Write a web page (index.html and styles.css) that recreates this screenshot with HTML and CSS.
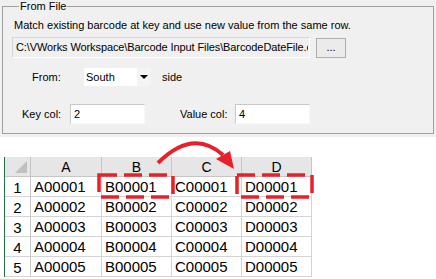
FILE: index.html
```html
<!DOCTYPE html>
<html lang="en">
<head>
    <meta charset="UTF-8">
    <title>Barcode input</title>
    <link rel="stylesheet" href="styles.css">
</head>
<body>
    <div class="dialog">
        <fieldset class="group">
            <legend>From File</legend>
            <p class="hint">Match existing barcode at key and use new value from the same row.</p>
            <div class="file-row">
                <div class="path"><span>C:\VWorks Workspace\Barcode Input Files\BarcodeDateFile.csv</span></div>
                <div class="browse">...</div>
            </div>
            <div class="from-row">
                <span class="from-lbl">From:</span>
                <div class="combo"><span class="combo-val">South</span><span class="drop"><i></i></span></div>
                <span class="side">side</span>
            </div>
            <div class="col-row">
                <span class="key-lbl">Key col:</span>
                <div class="field">2</div>
                <span class="val-lbl">Value col:</span>
                <div class="field">4</div>
            </div>
        </fieldset>
    </div>
    <div class="sheet-wrap">
        <div class="sheet">
            <div class="hd corner"><i></i></div><div class="hd">A</div><div class="hd">B</div><div class="hd">C</div><div class="hd">D</div>
            <div class="rn">1</div><div class="c">A00001</div><div class="c">B00001</div><div class="c">C00001</div><div class="c">D00001</div>
            <div class="rn">2</div><div class="c">A00002</div><div class="c">B00002</div><div class="c">C00002</div><div class="c">D00002</div>
            <div class="rn">3</div><div class="c">A00003</div><div class="c">B00003</div><div class="c">C00003</div><div class="c">D00003</div>
            <div class="rn">4</div><div class="c">A00004</div><div class="c">B00004</div><div class="c">C00004</div><div class="c">D00004</div>
            <div class="rn">5</div><div class="c">A00005</div><div class="c">B00005</div><div class="c">C00005</div><div class="c">D00005</div>
        </div>
        <svg class="marks" width="436" height="142" viewBox="0 137 436 142">
            <rect x="99" y="175" width="74" height="22" fill="none" stroke="#e8202a" stroke-width="3.5" stroke-dasharray="18 7"/>
            <rect x="237" y="175" width="75" height="22" fill="none" stroke="#e8202a" stroke-width="3.5" stroke-dasharray="18 7"/>
            <path d="M158 163 Q193 128 223 155" fill="none" stroke="#e8202a" stroke-width="4"/>
            <polygon points="216,159 230,151 234,169" fill="#e8202a"/>
        </svg>
    </div>
</body>
</html>
```
FILE: styles.css
```css
body{
    margin:0;
    width:436px;
    height:279px;
    background:#fff;
    font-family:"Liberation Sans", Arial, sans-serif;
    font-size:11px;
    color:#000;
    overflow:hidden;
}
.dialog{
    background:#f0f0f0;
    height:137px;
    box-sizing:border-box;
}
.group{
    margin:0 2px;
    height:134px;
    box-sizing:border-box;
    border:1px solid #a0a0a0;
    padding:0 0 0 9px;
}
.group legend{
    margin-left:7px;
    padding:0 1px;
    line-height:13px;
}
.hint{
    margin:6px 0 0 2px;
    line-height:13px;
}
.file-row{
    display:flex;
    margin-top:5px;
}
.path{
    width:298px;
    height:21px;
    box-sizing:border-box;
    border:1px solid #d6d6d6;
    border-right-color:#fff;
    border-bottom-color:#fff;
    padding:3px 0 0 3px;
    white-space:nowrap;
    overflow:hidden;
    line-height:13px;
    letter-spacing:-0.1px;
}
.path span{
    display:block;
    width:292px;
    overflow:hidden;
}
.browse{
    width:30px;
    height:20px;
    margin-left:6px;
    margin-top:1px;
    box-sizing:border-box;
    border:1px solid #adadad;
    background:#ebebeb;
    text-align:center;
    line-height:17px;
}
.from-row{
    display:flex;
    align-items:center;
    margin-top:10px;
    height:18px;
}
.from-lbl{
    margin-left:20px;
    width:40px;
}
.combo{
    display:flex;
    width:67px;
    height:18px;
    margin-left:12px;
    background:#fff;
}
.combo-val{
    flex:1;
    padding:3px 0 0 2px;
}
.drop{
    width:14px;
    display:flex;
    align-items:center;
    justify-content:center;
    background:#f4f4f4;
}
.drop i{
    border-left:4px solid transparent;
    border-right:4px solid transparent;
    border-top:4px solid #000;
}
.side{
    margin-left:11px;
}
.col-row{
    display:flex;
    align-items:center;
    margin-top:18px;
    height:20px;
}
.key-lbl{
    margin-left:10px;
    width:48px;
}
.val-lbl{
    margin-left:35px;
    width:55px;
}
.field{
    width:75px;
    height:20px;
    box-sizing:border-box;
    background:#fff;
    border:1px solid #c8c8c8;
    border-right-color:#f8f8f8;
    border-bottom-color:#f8f8f8;
    padding:3px 0 0 3px;
    line-height:13px;
}
.sheet-wrap{
    position:relative;
    height:142px;
    padding-top:20px;
    box-sizing:border-box;
}
.sheet{
    display:grid;
    grid-template-columns:26px 71px 70px 70px 70px;
    grid-auto-rows:20px;
    margin-left:4px;
    width:307px;
    border-left:1px solid #217346;
    font-size:15px;
}
.hd{
    background:#e6e6e6;
    border-right:1px solid #c6c6c6;
    border-bottom:1px solid #c6c6c6;
    text-align:center;
    font-size:14px;
    line-height:20px;
    box-sizing:border-box;
}
.corner{
    position:relative;
}
.corner i{
    position:absolute;
    right:3px;
    bottom:3px;
    border-left:12px solid transparent;
    border-bottom:12px solid #c0c0c0;
}
.rn{
    border-right:1px solid #c6c6c6;
    border-bottom:1px solid #d4d4d4;
    text-align:center;
    line-height:22px;
    box-sizing:border-box;
}
.c{
    border-right:1px solid #d4d4d4;
    border-bottom:1px solid #d4d4d4;
    padding-left:3px;
    line-height:20px;
    box-sizing:border-box;
}
.marks{
    position:absolute;
    left:0;
    top:0;
}
```
